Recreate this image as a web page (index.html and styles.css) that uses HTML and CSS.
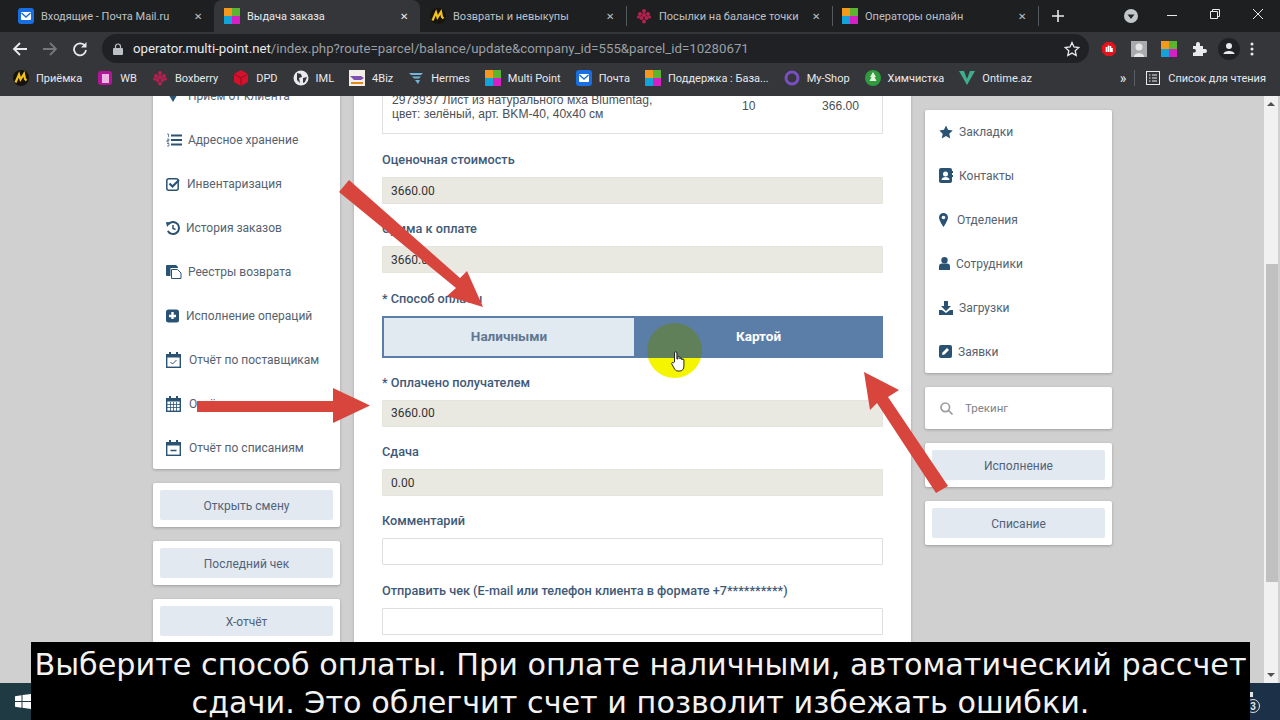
FILE: index.html
```html
<!DOCTYPE html>
<html lang="ru">
<head>
    <meta charset="UTF-8">
    <title>Выдача заказа</title>
    <link rel="stylesheet" href="styles.css">
</head>
<body>

<svg class="defs" width="0" height="0">
    <symbol id="fav-mp" viewBox="0 0 16 16">
        <rect width="8" height="8" fill="#f39a1e"/>
        <rect x="8" width="8" height="8" fill="#5cb531"/>
        <rect y="8" width="8" height="8" fill="#14a3d9"/>
        <rect x="8" y="8" width="8" height="8" fill="#d61fc4"/>
    </symbol>
    <symbol id="fav-mail" viewBox="0 0 16 16">
        <rect width="16" height="16" rx="3" fill="#1a6fe0"/>
        <rect x="3" y="4" width="10" height="8" rx="1" fill="#fff"/>
        <path d="M3.5 5l4.5 4 4.5-4" fill="none" stroke="#1a6fe0" stroke-width="1.4"/>
    </symbol>
    <symbol id="fav-y" viewBox="0 0 16 16">
        <circle cx="8" cy="8" r="8" fill="#16140c"/>
        <path d="M2.5 12.5L6 4.5l1.5 5L11 4l1 5 1.500 1.500" fill="none" stroke="#f3c21d" stroke-width="2.2"/>
    </symbol>
    <symbol id="fav-berry" viewBox="0 0 16 16">
        <g fill="#b5204f">
            <circle cx="8" cy="3" r="2"/><circle cx="4" cy="6" r="2"/><circle cx="12" cy="6" r="2"/>
            <circle cx="8" cy="7" r="2"/><circle cx="2.5" cy="9" r="1.6"/><circle cx="13.5" cy="9" r="1.6"/>
            <circle cx="5.5" cy="10" r="2"/><circle cx="10.5" cy="10" r="2"/><circle cx="8" cy="13.5" r="2"/>
        </g>
    </symbol>
</svg>

<div class="screen">
    <!-- Вкладки -->
    <div class="tabstrip">
        <div class="tab"><svg class="fav"><use href="#fav-mail"/></svg><span class="tab-title">Входящие - Почта Mail.ru</span><span class="tab-close">✕</span></div>
        <div class="tab tab-active"><svg class="fav"><use href="#fav-mp"/></svg><span class="tab-title">Выдача заказа</span><span class="tab-close">✕</span></div>
        <div class="tab"><svg class="fav"><use href="#fav-y"/></svg><span class="tab-title">Возвраты и невыкупы</span><span class="tab-close">✕</span></div>
        <div class="tab tab-sep"><svg class="fav"><use href="#fav-berry"/></svg><span class="tab-title">Посылки на балансе точки</span><span class="tab-close">✕</span></div>
        <div class="tab tab-sep"><svg class="fav"><use href="#fav-mp"/></svg><span class="tab-title">Операторы онлайн</span><span class="tab-close">✕</span></div>
        <div class="tab-new">
            <svg width="14" height="14" viewBox="0 0 14 14"><path d="M7 1v12M1 7h12" stroke="#e8eaed" stroke-width="1.6"/></svg>
        </div>
        <div class="win-controls">
            <svg class="win-search" width="16" height="16" viewBox="0 0 16 16"><circle cx="8" cy="8" r="7" fill="#c4c7ca"/><path d="M4.5 6.5h7L8 11z" fill="#26282a"/></svg>
            <svg class="win-min" width="12" height="12" viewBox="0 0 12 12"><path d="M1 5.5h10" stroke="#e8eaed"/></svg>
            <svg class="win-max" width="12" height="12" viewBox="0 0 12 12"><path d="M1.5 3.5h7v7h-7zM3.5 3.5v-2h7v7h-2" fill="none" stroke="#e8eaed"/></svg>
            <svg class="win-close" width="12" height="12" viewBox="0 0 12 12"><path d="M1 1l10 10M11 1L1 11" stroke="#e8eaed"/></svg>
        </div>
    </div>

    <!-- Адресная строка -->
    <div class="toolbar">
        <svg class="tool-back" width="16" height="16" viewBox="0 0 16 16"><path d="M15 8H2M8 2L2 8l6 6" fill="none" stroke="#e8eaed" stroke-width="1.8"/></svg>
        <svg class="tool-forward" width="16" height="16" viewBox="0 0 16 16"><path d="M1 8h13M8 2l6 6-6 6" fill="none" stroke="#75777a" stroke-width="1.8"/></svg>
        <svg class="tool-reload" width="16" height="16" viewBox="0 0 16 16"><path d="M13 5a6 6 0 1 0 1 4" fill="none" stroke="#e8eaed" stroke-width="1.8"/><path d="M14.500 1v5.500H9z" fill="#e8eaed"/></svg>
        <div class="omnibox">
            <svg class="lock" width="10" height="12" viewBox="0 0 10 12"><path d="M2.500 5V3.500a2.500 2.500 0 0 1 5 0V5" fill="none" stroke="#bdc1c6" stroke-width="1.2"/><rect y="5" width="10" height="7" rx="1" fill="#bdc1c6"/></svg>
            <span class="url"><span class="url-host">operator.multi-point.net</span>/index.php?route=parcel/balance/update&amp;company_id=555&amp;parcel_id=10280671</span>
            <svg class="star" width="16" height="16" viewBox="0 0 16 16"><path d="M8 1.500l2 4.500 4.800.5-3.600 3.200 1 4.800L8 12.100l-4.200 2.400 1-4.800L1.200 6.500 6 6z" fill="none" stroke="#e8eaed" stroke-width="1.3"/></svg>
        </div>
        <div class="extensions">
            <svg width="16" height="16" viewBox="0 0 16 16"><path d="M5 1h6l4 4v6l-4 4H5l-4-4V5z" fill="#e1141c"/><path d="M5.500 11V6M7.500 11V4.500M9.500 11V5M11 11V7" stroke="#fff" stroke-width="1.6"/></svg>
            <svg width="16" height="16" viewBox="0 0 16 16"><rect width="16" height="16" fill="#a9acae"/><circle cx="8" cy="6" r="3.500" fill="#e6e6e6"/><path d="M3 16c0-5 10-5 10 0z" fill="#e6e6e6"/></svg>
            <svg width="16" height="16"><use href="#fav-mp"/></svg>
            <svg width="16" height="16" viewBox="0 0 16 16"><path d="M2 5h3V3a2 2 0 0 1 4 0v2h3v3h2a2 2 0 0 1 0 4h-2v3H2v-3.500h1.500a1.800 1.800 0 0 0 0-3.500H2z" fill="#e8eaed"/></svg>
            <svg width="22" height="22" viewBox="0 0 22 22"><circle cx="11" cy="11" r="11" fill="#202124"/><circle cx="11" cy="8" r="3" fill="#e8eaed"/><path d="M5.500 16c0-4 11-4 11 0z" fill="#e8eaed"/></svg>
            <svg width="4" height="16" viewBox="0 0 4 16"><circle cx="2" cy="3" r="1.500" fill="#e8eaed"/><circle cx="2" cy="8" r="1.500" fill="#e8eaed"/><circle cx="2" cy="13" r="1.500" fill="#e8eaed"/></svg>
        </div>
    </div>

    <!-- Закладки -->
    <div class="bookmarks">
        <a class="bm"><svg class="fav"><use href="#fav-y"/></svg>Приёмка</a>
        <a class="bm"><svg class="fav" viewBox="0 0 16 16"><rect x="1" y="1" width="14" height="14" rx="3" fill="#b3159b"/><rect x="5" y="4" width="7" height="9" fill="#e9b7e0"/></svg>WB</a>
        <a class="bm"><svg class="fav"><use href="#fav-berry"/></svg>Boxberry</a>
        <a class="bm"><svg class="fav" viewBox="0 0 16 16"><path d="M8 0l7 4v8l-7 4-7-4V4z" fill="#d4122d"/><path d="M1 4l7 4 7-4M8 8v8" stroke="#8f0f22" fill="none"/></svg>DPD</a>
        <a class="bm"><svg class="fav" viewBox="0 0 16 16"><circle cx="8" cy="8" r="7.500" fill="#e8eaed"/><path d="M4 3l4 1 1 3-3 1 1 5-3-3zM10 8l4-1-2 5-2 1z" fill="#35363a"/></svg>IML</a>
        <a class="bm"><svg class="fav" viewBox="0 0 16 16"><rect width="16" height="16" fill="#f2eee8"/><path d="M1 6h11l3 2-3 2H5z" fill="#7d4fb0"/><path d="M2 13h12" stroke="#e08a1e" stroke-width="2"/></svg>4Biz</a>
        <a class="bm"><svg class="fav" viewBox="0 0 16 16"><path d="M1 3h14l-2 2H3zM4 6.500h9l-2 2H6zM7 10h5l-2 4z" fill="#6fb6d8"/></svg>Hermes</a>
        <a class="bm"><svg class="fav"><use href="#fav-mp"/></svg>Multi Point</a>
        <a class="bm"><svg class="fav"><use href="#fav-mail"/></svg>Почта</a>
        <a class="bm"><svg class="fav"><use href="#fav-mp"/></svg>Поддержка : База...</a>
        <a class="bm"><svg class="fav" viewBox="0 0 16 16"><circle cx="8" cy="8" r="6" fill="none" stroke="#7a4fc4" stroke-width="3"/></svg>My-Shop</a>
        <a class="bm"><svg class="fav" viewBox="0 0 16 16"><circle cx="8" cy="8" r="8" fill="#2f9a3e"/><path d="M8 2l3 5H9.500l2 4h-7l2-4H5z" fill="#e6f3df"/></svg>Химчистка</a>
        <a class="bm"><svg class="fav" viewBox="0 0 16 16"><path d="M0 1h5l3 8 3-8h5L8 15z" fill="#3fae8a"/></svg>Ontime.az</a>
        <div class="bm-end">
            <span class="bm-more">»</span>
            <span class="bm-sep"></span>
            <svg width="14" height="14" viewBox="0 0 14 14"><rect x=".5" y=".5" width="13" height="13" fill="none" stroke="#e8eaed"/><path d="M3 4h1.500M3 7h1.500M3 10h1.500M6 4h5M6 7h5M6 10h5" stroke="#e8eaed"/></svg>
            <span>Список для чтения</span>
        </div>
    </div>

    <!-- Страница -->
    <div class="content">
        <div class="page">
            <aside class="side side-left">
                <div class="card">
                    <ul class="menu">
                        <li><svg width="16" height="16" viewBox="0 0 16 16" class="ico"><path d="M7 2v10M4 7l3 5 3-5" fill="none" stroke="#2a5273" stroke-width="2"/></svg>Приём от клиента</li>
                        <li><svg width="16" height="14" viewBox="0 0 16 14" class="ico"><path d="M5 2.500h11M5 7h11M5 11.500h11" stroke="#2a5273" stroke-width="1.8"/><path d="M1 1h1.500v3M1 6h2v1.500H1V9h2M1 10.500h2V13H1" fill="none" stroke="#2a5273" stroke-width=".7"/></svg>Адресное хранение</li>
                        <li><svg width="15" height="14" viewBox="0 0 15 14" class="ico"><rect x=".8" y="1.800" width="11.400" height="11.400" rx="2" fill="none" stroke="#2a5273" stroke-width="1.5"/><path d="M3.500 6.500l3 3L13 3" fill="none" stroke="#2a5273" stroke-width="2.2"/></svg>Инвентаризация</li>
                        <li><svg width="14" height="14" viewBox="0 0 14 14" class="ico"><path d="M2.500 3A6 6 0 1 1 1.800 10" fill="none" stroke="#2a5273" stroke-width="2"/><path d="M0 1l5 .5L1 6z" fill="#2a5273"/><path d="M7 4v3.500l2.500 1" fill="none" stroke="#2a5273" stroke-width="1.5"/></svg>История заказов</li>
                        <li><svg width="16" height="15" viewBox="0 0 16 15" class="ico"><path d="M0 2a1 1 0 0 1 1-1h7v3H4.500v8H1a1 1 0 0 1-1-1z" fill="#2a5273"/><path d="M5.500 5.500h6l3.500 3.500v5.500H5.500z" fill="#fff" stroke="#2a5273"/><path d="M8 1h2l2 2v1H8z" fill="#2a5273"/></svg>Реестры возврата</li>
                        <li><svg width="14" height="14" viewBox="0 0 14 14" class="ico"><rect width="13" height="13" y=".5" rx="2.500" fill="#2a5273"/><path d="M6.500 3v7M3 7h7" stroke="#fff" stroke-width="2.4"/></svg>Исполнение операций</li>
                        <li><svg width="17" height="16" viewBox="0 0 17 16" class="ico"><rect x=".7" y="2.700" width="13.600" height="12.600" fill="none" stroke="#2a5273" stroke-width="1.4"/><path d="M0 2h15v3.500H0z" fill="#2a5273"/><path d="M4 0v3M11 0v3" stroke="#2a5273" stroke-width="2"/><path d="M4.500 10l2 2 4-4" fill="none" stroke="#2a5273"/></svg>Отчёт по поставщикам</li>
                        <li><svg width="17" height="16" viewBox="0 0 17 16" class="ico"><rect x=".7" y="2.700" width="13.600" height="12.600" fill="none" stroke="#2a5273" stroke-width="1.4"/><path d="M0 2h15v3.500H0z" fill="#2a5273"/><path d="M4 0v3M11 0v3" stroke="#2a5273" stroke-width="2"/><path d="M1 8.500h13M1 11.500h13M4.500 6v9M7.500 6v9M10.500 6v9" stroke="#2a5273" stroke-width=".8"/></svg>Отчёт</li>
                        <li><svg width="17" height="16" viewBox="0 0 17 16" class="ico"><rect x=".7" y="2.700" width="13.600" height="12.600" fill="none" stroke="#2a5273" stroke-width="1.4"/><path d="M0 2h15v3.500H0z" fill="#2a5273"/><path d="M4 0v3M11 0v3" stroke="#2a5273" stroke-width="2"/><path d="M4.500 10.500h6" stroke="#2a5273" stroke-width="1.5"/></svg>Отчёт по списаниям</li>
                    </ul>
                </div>
                <div class="card card-btn"><button class="btn-soft">Открыть смену</button></div>
                <div class="card card-btn"><button class="btn-soft">Последний чек</button></div>
                <div class="card card-btn"><button class="btn-soft">X-отчёт</button></div>
            </aside>

            <main class="panel">
                <div class="goods">
                    <div class="goods-name">2973937 Лист из натурального мха Blumentag, цвет: зелёный, арт. BKM-40, 40x40 см</div>
                    <div class="goods-qty">10</div>
                    <div class="goods-price">366.00</div>
                </div>

                <div class="field goods-next">
                    <label>Оценочная стоимость</label>
                    <input class="inp inp-ro" value="3660.00" readonly>
                </div>
                <div class="field">
                    <label>Сумма к оплате</label>
                    <input class="inp inp-ro" value="3660.00" readonly>
                </div>
                <div class="field field-pay">
                    <label>* Способ оплаты</label>
                    <div class="pay-switch">
                        <button class="pay pay-cash">Наличными</button>
                        <button class="pay pay-card">Картой</button>
                    </div>
                </div>
                <div class="field">
                    <label>* Оплачено получателем</label>
                    <input class="inp inp-ro" value="3660.00" readonly>
                </div>
                <div class="field">
                    <label>Сдача</label>
                    <input class="inp inp-ro" value="0.00" readonly>
                </div>
                <div class="field">
                    <label>Комментарий</label>
                    <input class="inp">
                </div>
                <div class="field">
                    <label>Отправить чек (E-mail или телефон клиента в формате +7**********)</label>
                    <input class="inp">
                </div>
            </main>

            <aside class="side side-right">
                <div class="card">
                    <ul class="menu">
                        <li><svg width="14" height="14" viewBox="0 0 14 14" class="ico"><path d="M7 .5l2 4.300 4.700.6-3.400 3.300.9 4.700L7 11.100l-4.200 2.300.9-4.700L.3 5.400 5 4.800z" fill="#2a5273"/></svg>Закладки</li>
                        <li><svg width="14" height="15" viewBox="0 0 14 15" class="ico"><rect width="13" height="15" rx="2" fill="#2a5273"/><circle cx="6.500" cy="6" r="2.500" fill="#fff"/><path d="M2.500 12c0-4 8-4 8 0z" fill="#fff"/><path d="M13 3h1v2h-1zM13 7h1v2h-1z" fill="#2a5273"/></svg>Контакты</li>
                        <li><svg width="12" height="14" viewBox="0 0 12 14" class="ico"><path d="M4.500 0a4.500 4.500 0 0 1 4.500 4.500C9 7.500 4.500 14 4.500 14S0 7.500 0 4.500A4.500 4.500 0 0 1 4.500 0z" fill="#2a5273"/><circle cx="4.500" cy="4.500" r="1.800" fill="#fff"/></svg>Отделения</li>
                        <li><svg width="11" height="13" viewBox="0 0 11 13" class="ico"><circle cx="5.500" cy="3.200" r="3.200" fill="#2a5273"/><path d="M0 13V9.500a3 3 0 0 1 3-3h5a3 3 0 0 1 3 3V13z" fill="#2a5273"/></svg>Сотрудники</li>
                        <li><svg width="14" height="14" viewBox="0 0 14 14" class="ico"><path d="M5 0h4v5h3L7 10 2 5h3z" fill="#2a5273"/><path d="M0 9h3l4 3 4-3h3v5H0z" fill="#2a5273"/></svg>Загрузки</li>
                        <li><svg width="13" height="13" viewBox="0 0 13 13" class="ico"><rect width="13" height="13" rx="2" fill="#2a5273"/><path d="M3 10l.5-2.500L8 3l2 2-4.500 4.500z" fill="#fff"/></svg>Заявки</li>
                    </ul>
                </div>
                <div class="card card-search">
                    <svg width="13" height="13" viewBox="0 0 13 13"><circle cx="5.300" cy="5.300" r="4.300" fill="none" stroke="#9a9ea3" stroke-width="1.7"/><path d="M8.500 8.500l4 4" stroke="#9a9ea3" stroke-width="1.7"/></svg>
                    <span>Трекинг</span>
                </div>
                <div class="card card-btn"><button class="btn-soft">Исполнение</button></div>
                <div class="card card-btn"><button class="btn-soft">Списание</button></div>
            </aside>
        </div>
        <div class="scrollbar">
            <span class="sb-arrow"></span>
            <div class="sb-track"><div class="sb-thumb"></div></div>
            <span class="sb-arrow sb-arrow-down"></span>
        </div>
    </div>

    <!-- Панель задач -->
    <div class="taskbar">
        <svg width="16" height="15" viewBox="0 0 16 15"><path d="M0 2.200l6.500-1V7H0zM7.500 1L16 0v7H7.500zM0 8h6.500v5.800l-6.500-1zM7.500 8H16v7l-8.500-1.200z" fill="#fff"/></svg>
        <svg width="14" height="22" viewBox="0 0 14 22"><path d="M0 1h6v5H0z" fill="#dfe5ea"/><circle cx="6" cy="15" r="6.500" fill="#1c3048" stroke="#dfe5ea"/><text x="6" y="18.500" class="tray-num">3</text></svg>
    </div>

    <!-- Стрелки поверх видео -->
    <svg class="arrows" width="1280" height="720" viewBox="0 0 1280 720">
        <path d="M339 192l10-12 111 98 7-7 16 36-36-11 9-8z" fill="#d8453d"/>
        <path d="M197 401h136v-13l37 17.500-37 17.500v-11H197z" fill="#d8453d"/>
        <path d="M948 486l-12 7-59-90-7 7-6-38 35 18-11 7z" fill="#d8453d"/>
    </svg>
    <div class="click-spot"></div>
    <svg class="hand" width="14" height="21" viewBox="0 0 14 21"><path d="M3.500 11V2a1.200 1.200 0 0 1 2.400 0v6l1 0V6.500a1 1 0 0 1 2 0V8a1 1 0 0 1 2 0v1a1 1 0 0 1 2 0v6c0 3-1.500 5-4 5H7c-2 0-3-1-4-3L.8 13c-.6-1 .8-2.200 1.700-1.200z" fill="#fff" stroke="#111" stroke-width=".9"/></svg>

    <div class="subtitles">
        <div>Выберите способ оплаты. При оплате наличными, автоматический рассчет</div>
        <div>сдачи. Это облегчит счет и позволит избежать ошибки.</div>
    </div>
</div>

</body>
</html>
```

FILE: styles.css
```css
html, body {
    margin: 0;
    height: 100%;
    overflow: hidden;
}
body {
    font-family: Roboto, "Liberation Sans", sans-serif;
    background-color: #000;
}
ul {
    margin: 0;
    padding: 0;
    list-style: none;
}
button {
    font-family: inherit;
    border: none;
    padding: 0;
}
.defs {
    position: absolute;
}
.screen {
    position: relative;
    display: flex;
    flex-direction: column;
    width: 1280px;
    height: 720px;
    overflow: hidden;
}

/* вкладки */
.tabstrip {
    display: flex;
    flex: none;
    align-items: stretch;
    height: 32px;
    padding-left: 8px;
    background-color: #1d1f21;
}
.tab {
    position: relative;
    display: flex;
    align-items: center;
    box-sizing: border-box;
    width: 206px;
    padding-left: 10px;
    color: #bdc1c6;
    font-size: 11px;
}
.tab-active {
    color: #e8eaed;
    background-color: #35363a;
    border-radius: 8px 8px 0 0;
}
.tab-sep::before {
    content: "";
    position: absolute;
    left: 0;
    top: 6px;
    bottom: 6px;
    width: 1px;
    background-color: #55585c;
}
.fav {
    flex: none;
    width: 16px;
    height: 16px;
}
.tab-title {
    flex: 1;
    margin-left: 7px;
    white-space: nowrap;
    overflow: hidden;
}
.tab-close {
    width: 13px;
    margin-right: 10px;
    font-size: 10px;
    text-align: center;
}
.tab-new {
    display: flex;
    align-items: center;
    padding-left: 12px;
    border-left: 1px solid #55585c;
    margin: 6px 0;
}
.win-controls {
    display: flex;
    align-items: center;
    margin-left: auto;
    height: 32px;
}
.win-search {
    margin-right: 27px;
}
.win-min {
    margin-right: 31px;
}
.win-max {
    margin-right: 31px;
    margin-top: -4px;
}
.win-close {
    margin-right: 16px;
    margin-top: -4px;
}

/* адресная строка */
.toolbar {
    display: flex;
    flex: none;
    align-items: center;
    height: 33px;
    padding-left: 12px;
    background-color: #35363a;
}
.tool-forward, .tool-reload {
    margin-left: 14px;
}
.omnibox {
    display: flex;
    align-items: center;
    box-sizing: border-box;
    width: 987px;
    height: 29px;
    margin-left: 14px;
    padding: 0 9px 0 11px;
    color: #9aa0a6;
    font-size: 13.25px;
    background-color: #202124;
    border-radius: 15px;
}
.url {
    flex: 1;
    margin-left: 10px;
    white-space: nowrap;
}
.url-host {
    color: #e8eaed;
}
.extensions {
    display: flex;
    align-items: center;
    margin-left: 12px;
}
.extensions svg {
    margin-right: 14px;
}
.extensions svg:nth-child(5) {
    margin-right: 10px;
    margin-left: -3px;
}

/* закладки */
.bookmarks {
    display: flex;
    flex: none;
    align-items: center;
    box-sizing: border-box;
    height: 31px;
    padding: 0 0 5px 13px;
    color: #e8eaed;
    font-size: 11px;
    background-color: #35363a;
}
.bm {
    display: flex;
    align-items: center;
    gap: 7px;
    margin-right: 15px;
    white-space: nowrap;
}
.bm-end {
    display: flex;
    align-items: center;
    margin-left: auto;
    padding-right: 14px;
}
.bm-more {
    font-size: 14px;
}
.bm-sep {
    width: 1px;
    height: 16px;
    margin: 0 11px 0 8px;
    background-color: #5b5e62;
}
.bm-end svg {
    margin-right: 8px;
}

/* страница */
.content {
    display: flex;
    flex: 1;
    min-height: 0;
    overflow: hidden;
    background-color: #d0d0d0;
}
.page {
    display: flex;
    flex: 1;
    align-items: flex-start;
    justify-content: center;
    gap: 14px;
    padding: 14px 0 0 1px;
}
.side {
    display: flex;
    flex: none;
    flex-direction: column;
    gap: 14px;
    width: 187px;
}
.side-left {
    margin-top: -36px;
}
.card {
    background-color: #fff;
    border-radius: 2px;
    box-shadow: 0 1px 3px rgba(0, 0, 0, 0.25);
}
.menu {
    margin-top: -1px;
    padding-left: 13px;
    color: #55626f;
    font-size: 12px;
}
.side-right .menu {
    padding-left: 14px;
}
.menu li {
    display: flex;
    align-items: center;
    box-sizing: border-box;
    height: 44px;
    padding-top: 1px;
    white-space: nowrap;
}
.ico {
    flex: none;
    margin-right: 6px;
}
.card-btn {
    padding: 7px;
}
.btn-soft {
    display: block;
    width: 100%;
    height: 30px;
    padding-top: 1px;
    color: #51637a;
    font-size: 12px;
    background-color: #e2e9f0;
    border-radius: 2px;
}
.card-search {
    display: flex;
    align-items: center;
    height: 42px;
    padding-left: 15px;
    color: #7c8389;
    font-size: 11.5px;
}
.card-search span {
    margin-left: 12px;
}

/* форма */
.panel {
    flex: none;
    box-sizing: border-box;
    width: 557px;
    margin-top: -30px;
    padding: 0 28px 100px;
    background-color: #fff;
    box-shadow: 0 0 3px rgba(0, 0, 0, 0.2);
}
.goods {
    display: grid;
    grid-template-columns: 300px 1fr auto;
    box-sizing: border-box;
    height: 54px;
    padding: 12px 23px 12px 9px;
    color: #4b4f53;
    font-family: "Liberation Sans", Arial, sans-serif;
    font-size: 12.1px;
    line-height: 14px;
    border: 1px solid #dfdfdf;
}
.goods-name {
    width: 275px;
}
.goods-qty {
    padding-left: 50px;
    line-height: 26px;
}
.goods-price {
    line-height: 26px;
}
.goods-next {
    margin-top: 16px;
}
.field {
    margin-bottom: 15.4px;
}
.field-pay {
    margin-bottom: 14.9px;
}
.field label {
    display: block;
    margin-bottom: 8px;
    color: #3f5a78;
    font-size: 12.7px;
    font-weight: 500;
    line-height: 19px;
    white-space: nowrap;
}
.inp {
    display: block;
    box-sizing: border-box;
    width: 100%;
    height: 27px;
    margin: 0;
    padding: 0 8px;
    color: #333;
    font-family: inherit;
    font-size: 12px;
    background-color: #fff;
    border: 1px solid #dedede;
    border-radius: 1px;
    outline: none;
}
.inp-ro {
    background-color: #e9e9e2;
    border-color: #e4e4dd;
}
.pay-switch {
    display: grid;
    grid-template-columns: 252px 1fr;
    height: 42px;
}
.pay {
    padding-bottom: 2px;
    font-size: 13.5px;
    font-weight: 700;
}
.pay-cash {
    color: #5f7794;
    background-color: #e1e9f1;
    border: 2px solid #5b7ea8;
    border-right: none;
}
.pay-card {
    color: #fff;
    background-color: #5b7ea8;
}

/* скроллбар */
.scrollbar {
    display: flex;
    flex: none;
    flex-direction: column;
    align-items: center;
    width: 14px;
    margin-right: 2px;
    background-color: #f1f1f1;
}
.sb-arrow {
    flex: none;
    width: 0;
    height: 0;
    margin: 6px 0;
    border-left: 4px solid transparent;
    border-right: 4px solid transparent;
    border-bottom: 4px solid #505050;
}
.sb-arrow-down {
    border-top: 4px solid #505050;
    border-bottom: none;
}
.sb-track {
    flex: 1;
    width: 100%;
}
.sb-thumb {
    width: 12px;
    height: 318px;
    margin: 152px 0 0 2px;
    background-color: #c0c0c0;
}

/* панель задач */
.taskbar {
    display: flex;
    flex: none;
    align-items: center;
    justify-content: space-between;
    height: 37px;
    padding: 0 19px 0 15px;
    background: linear-gradient(90deg, #1f3a43, #1c3048);
}
.tray-num {
    fill: #dfe5ea;
    font-family: "Liberation Sans", sans-serif;
    font-size: 10px;
    font-weight: 700;
    text-anchor: middle;
}

/* то, что наложено на запись */
.arrows {
    position: absolute;
    left: 0;
    top: 0;
    pointer-events: none;
}
.click-spot {
    position: absolute;
    left: 647px;
    top: 323px;
    width: 55px;
    height: 55px;
    border-radius: 50%;
    background: linear-gradient(#5f8058 0 35px, #f5f500 35px);
}
.hand {
    position: absolute;
    left: 671px;
    top: 351px;
}
.subtitles {
    position: absolute;
    left: 31px;
    top: 642px;
    box-sizing: border-box;
    width: 1219px;
    height: 78px;
    padding-top: 4px;
    color: #f2f2f2;
    font-family: "DejaVu Sans", Verdana, sans-serif;
    font-size: 30.25px;
    line-height: 38px;
    text-align: center;
    white-space: nowrap;
    background-color: #000;
}
```
